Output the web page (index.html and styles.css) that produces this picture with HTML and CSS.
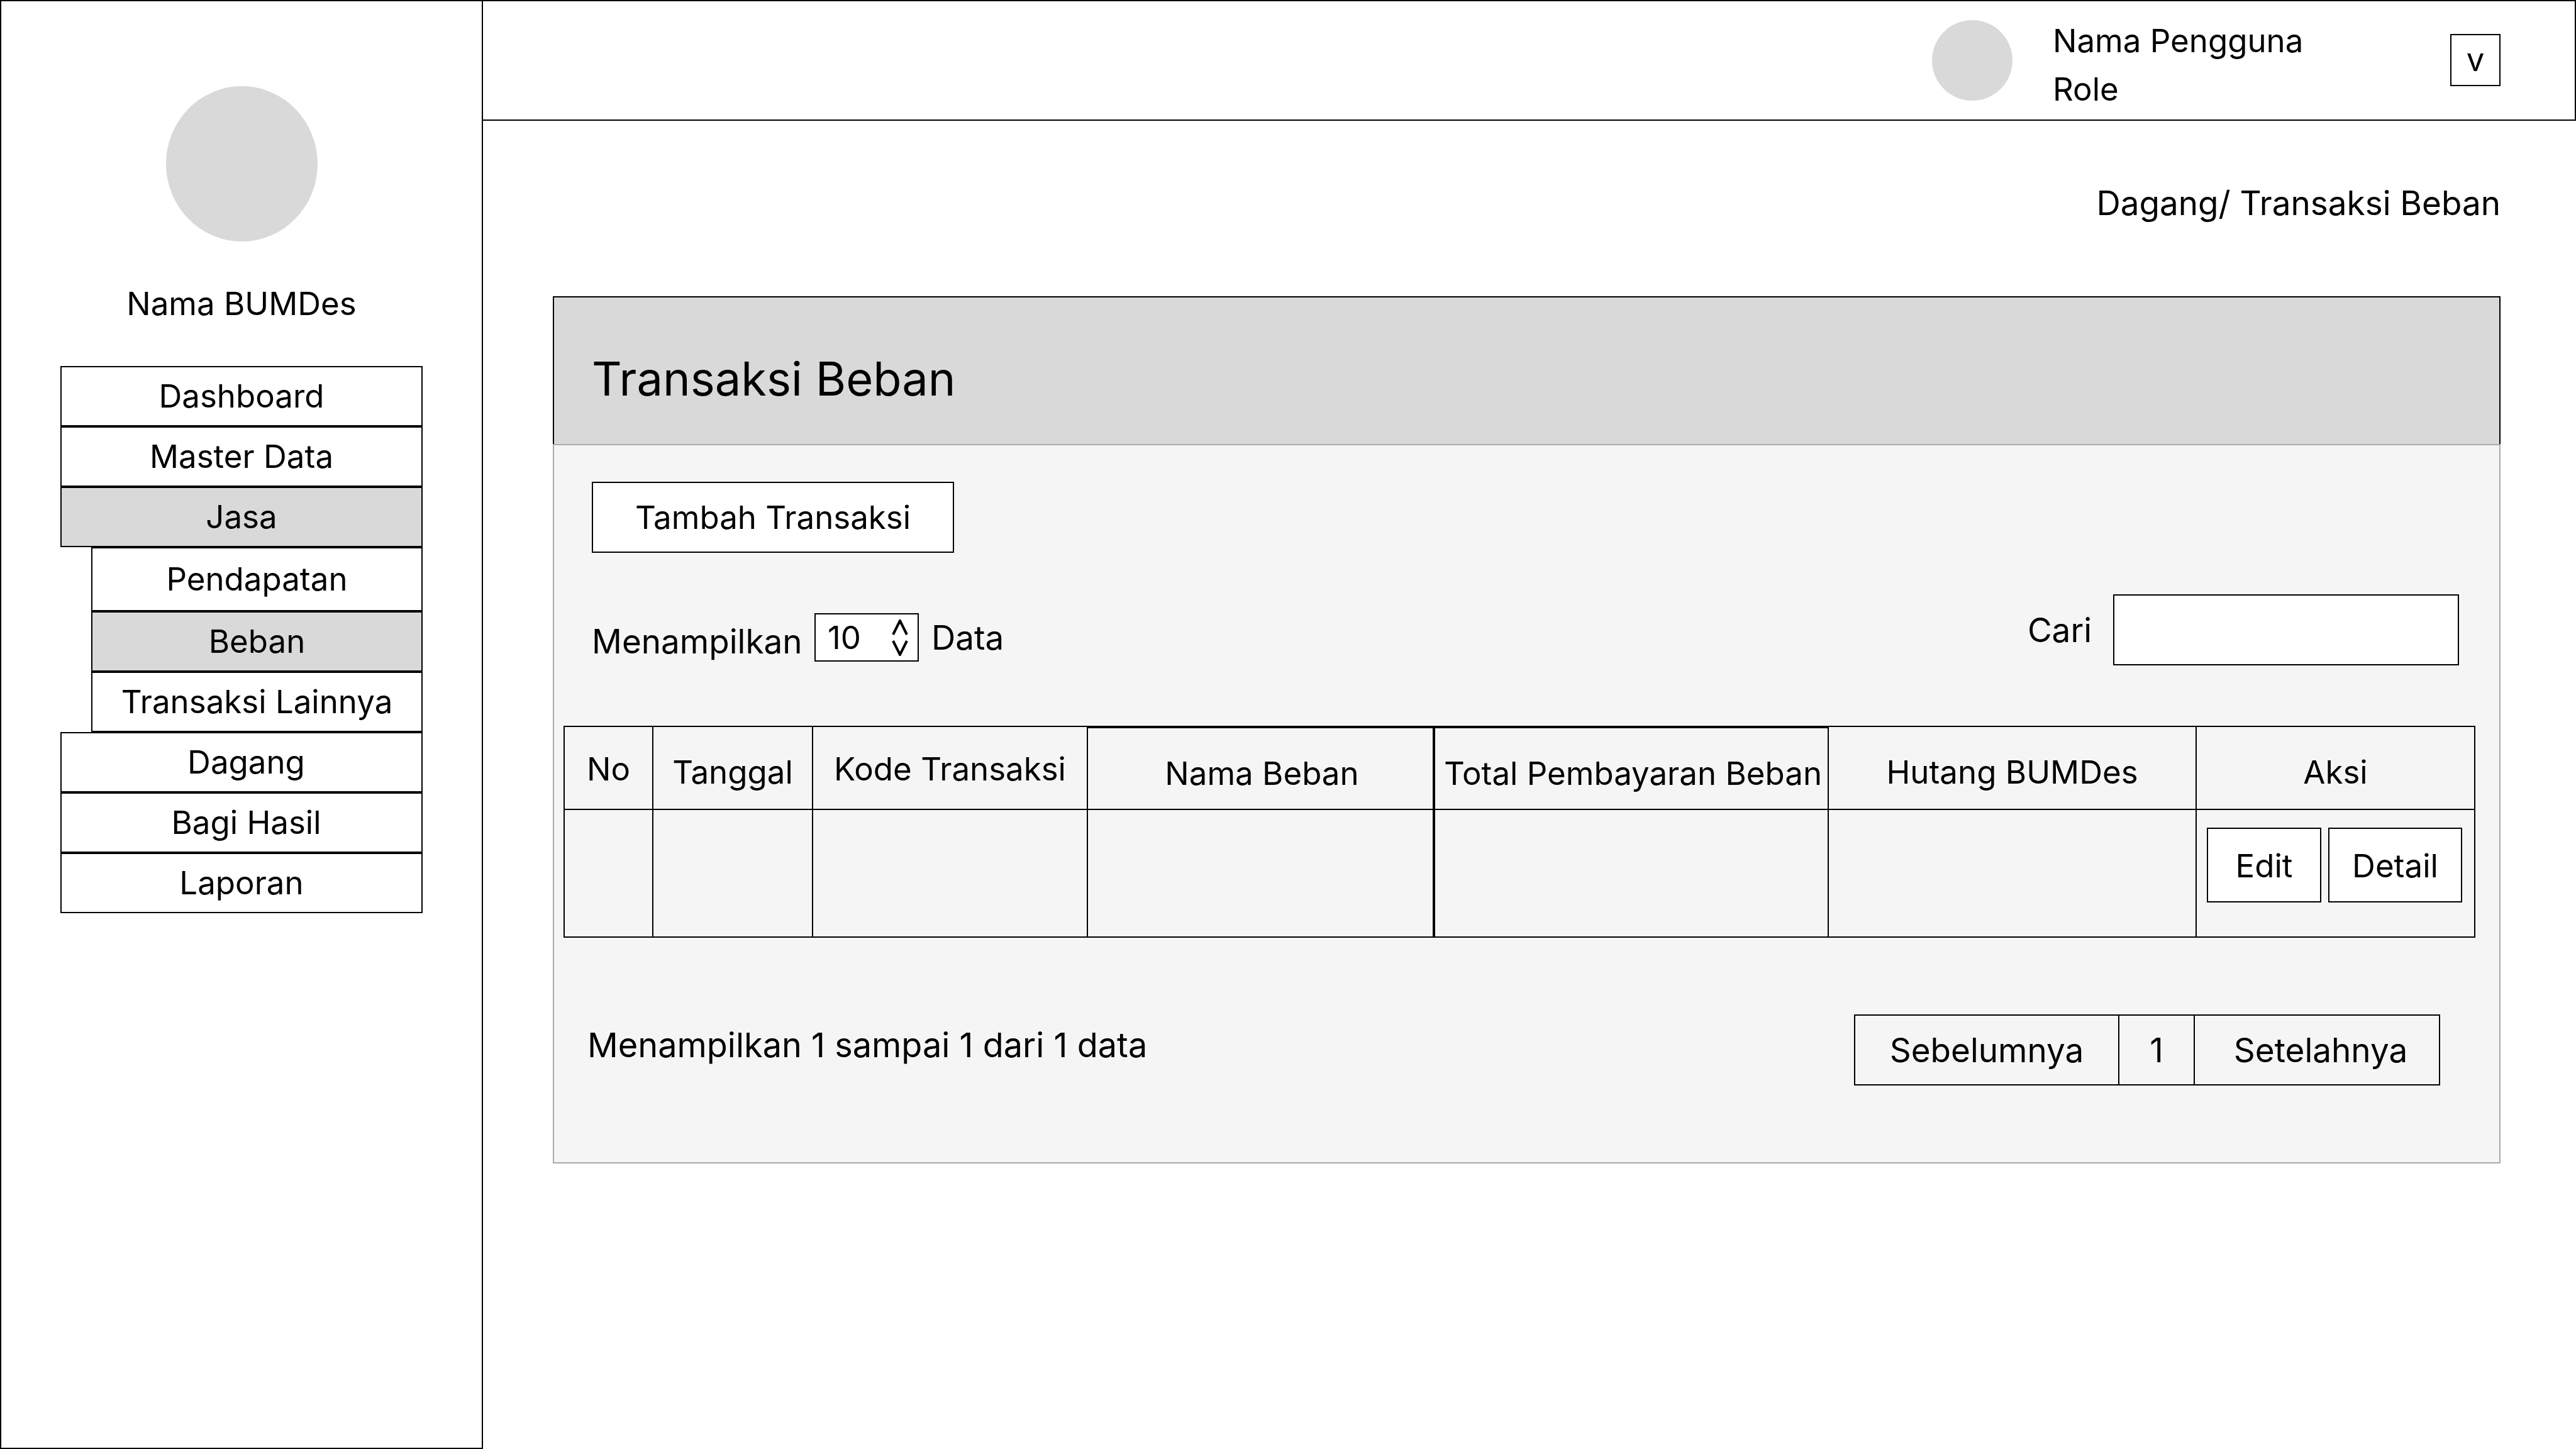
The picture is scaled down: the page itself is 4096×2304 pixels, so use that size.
FILE: index.html
```html
<!DOCTYPE html>
<html lang="id">
<head>
<meta charset="utf-8">
<meta name="viewport" content="width=device-width, initial-scale=1">
<title>Transaksi Beban</title>
<link rel="stylesheet" href="styles.css">
</head>
<body>
<div class="app">
  <aside class="sidebar">
    <div class="logo"></div>
    <p class="org-name">Nama BUMDes</p>
    <nav>
      <ul class="menu">
        <li><a class="menu-link" href="#">Dashboard</a></li>
        <li><a class="menu-link" href="#">Master Data</a></li>
        <li>
          <a class="menu-link is-active" href="#">Jasa</a>
          <ul class="submenu">
            <li><a class="menu-link is-tall" href="#">Pendapatan</a></li>
            <li><a class="menu-link is-active" href="#">Beban</a></li>
            <li><a class="menu-link" href="#">Transaksi Lainnya</a></li>
          </ul>
        </li>
        <li><a class="menu-link is-nudged" href="#">Dagang</a></li>
        <li><a class="menu-link is-nudged" href="#">Bagi Hasil</a></li>
        <li><a class="menu-link" href="#">Laporan</a></li>
      </ul>
    </nav>
  </aside>
  <div class="page">
    <header class="topbar">
      <div class="avatar"></div>
      <div class="user">
        <p>Nama Pengguna</p>
        <p>Role</p>
      </div>
      <button class="user-toggle" type="button">v</button>
    </header>
    <main class="content">
      <p class="breadcrumb">Dagang/ Transaksi Beban</p>
      <section class="card">
        <div class="card-header"><h1>Transaksi Beban</h1></div>
        <div class="card-body">
          <button class="btn btn-add" type="button">Tambah Transaksi</button>
          <div class="filters">
            <div class="length">
              <label class="length-label" for="length">Menampilkan</label>
              <div class="select-wrap">
                <select id="length"><option>10</option><option>25</option><option>50</option></select>
                <svg class="select-arrows" viewBox="0 0 26 58" aria-hidden="true">
                  <path d="M2 24 L13 2 L24 24 M2 34 L13 56 L24 34"/>
                </svg>
              </div>
              <span>Data</span>
            </div>
            <div class="search">
              <label for="search">Cari</label>
              <input id="search" type="text">
            </div>
          </div>
          <table class="data">
            <colgroup>
              <col class="col-no"><col class="col-date"><col class="col-code"><col class="col-name"><col class="col-total"><col class="col-debt"><col class="col-action">
            </colgroup>
            <thead>
              <tr>
                <th>No</th>
                <th class="low">Tanggal</th>
                <th>Kode Transaksi</th>
                <th class="lower thick-top thick-right">Nama Beban</th>
                <th class="lower thick-top">Total Pembayaran Beban</th>
                <th class="low">Hutang BUMDes</th>
                <th class="low">Aksi</th>
              </tr>
            </thead>
            <tbody>
              <tr>
                <td></td>
                <td></td>
                <td></td>
                <td class="thick-right"></td>
                <td></td>
                <td></td>
                <td>
                  <div class="actions">
                    <button class="btn btn-edit" type="button">Edit</button>
                    <button class="btn btn-detail" type="button">Detail</button>
                  </div>
                </td>
              </tr>
            </tbody>
          </table>
          <div class="card-footer">
            <p class="summary">Menampilkan 1 sampai 1 dari 1 data</p>
            <nav class="pagination">
              <button class="page-prev" type="button">Sebelumnya</button>
              <button class="page-number" type="button">1</button>
              <button class="page-next" type="button">Setelahnya</button>
            </nav>
          </div>
        </div>
      </section>
    </main>
  </div>
</div>
</body>
</html>
```
FILE: styles.css
```css
*,
*::before,
*::after {
  box-sizing: border-box;
}

body {
  margin: 0;
  background: #fff;
  color: #000;
  font-family: Inter, "Liberation Sans", sans-serif;
  font-size: 51px;
  line-height: 64px;
}

p,
h1,
ul {
  margin: 0;
  padding: 0;
}

ul {
  list-style: none;
}

button,
input,
select {
  margin: 0;
  padding: 0;
  border: 2px solid #000;
  border-radius: 0;
  background: #fff;
  color: inherit;
  font: inherit;
}

.app {
  display: flex;
  min-height: 100vh;
}

/* Sidebar */

.sidebar {
  flex: 0 0 768px;
  padding: 135px 94px 94px;
  border: 2px solid #000;
}

.logo {
  width: 241px;
  height: 247px;
  margin: 0 auto;
  border-radius: 50%;
  background: #d9d9d9;
}

.org-name {
  margin: 67px 0;
  text-align: center;
}

.menu-link {
  display: flex;
  align-items: center;
  justify-content: center;
  height: 96px;
  border: 2px solid #000;
  color: inherit;
  text-decoration: none;
}

.menu-link.is-active {
  background: #d9d9d9;
}

.menu-link.is-tall {
  height: 102px;
}

.menu-link.is-nudged {
  padding-left: 15px;
}

.submenu {
  margin-left: 49px;
}

/* Top bar */

.page {
  flex: 1;
  min-width: 0;
}

.topbar {
  display: flex;
  align-items: center;
  height: 192px;
  padding: 0 118px 0 0;
  border: 2px solid #000;
  border-left: 0;
}

.avatar {
  width: 128px;
  height: 128px;
  margin-left: auto;
  border-radius: 50%;
  background: #d9d9d9;
}

.user {
  width: 632px;
  margin-left: 64px;
  padding-top: 14px;
  line-height: 77px;
}

.user-toggle {
  width: 80px;
  height: 83px;
  margin-bottom: 2px;
}

/* Content */

.content {
  padding: 99px 120px 120px 111px;
}

.breadcrumb,
.length label,
.length span,
.search,
.card-footer button {
  font-size: 53px;
}

.breadcrumb {
  margin-bottom: 116px;
  text-align: right;
}

.card-header {
  height: 235px;
  padding: 84px 60px 0;
  border: 2px solid #000;
  border-bottom: 0;
  background: #d9d9d9;
}

h1 {
  font-size: 74px;
  font-weight: 400;
  line-height: 90px;
}

.card-body {
  padding: 58px 38px 122px 15px;
  border: 2px solid #aaa;
  background: #f5f5f5;
}

.btn-add {
  display: block;
  width: 576px;
  height: 113px;
  margin-left: 45px;
}

.filters {
  display: flex;
  align-items: center;
  justify-content: space-between;
  margin-top: 66px;
  padding: 0 26px 0 45px;
}

.length {
  display: flex;
  align-items: center;
  padding-top: 24px;
}

.length-label {
  width: 354px;
  padding-top: 12px;
}

.select-wrap {
  position: relative;
  width: 166px;
  height: 77px;
  margin-right: 20px;
}

.select-wrap select {
  width: 100%;
  height: 100%;
  padding-left: 19px;
  appearance: none;
}

.select-arrows {
  position: absolute;
  top: 10px;
  right: 17px;
  width: 26px;
  height: 58px;
  fill: none;
  stroke: #000;
  stroke-width: 4;
  pointer-events: none;
}

.search {
  display: flex;
  align-items: center;
  gap: 34px;
}

.search input {
  width: 550px;
  height: 113px;
  padding: 0 20px;
}

/* Transactions table */

.data {
  width: 100%;
  margin-top: 96px;
  border: solid #000;
  border-width: 2px 0 0 2px;
  border-spacing: 0;
  table-layout: fixed;
}

.col-no { width: 141px; }
.col-date { width: 254px; }
.col-code { width: 437px; }
.col-name { width: 552px; }
.col-total { width: 626px; }
.col-debt { width: 585px; }
.col-action { width: 443px; }

.data th,
.data td {
  padding: 0;
  border: solid #000;
  border-width: 0 2px 2px 0;
}

.data th {
  height: 132px;
  padding-top: 4px;
  font-weight: 400;
  white-space: nowrap;
}

.data th.low {
  padding-top: 13px;
}

.data th.lower {
  padding-top: 15px;
  padding-left: 5px;
}

.data td {
  height: 203px;
  vertical-align: top;
}

.data .thick-top {
  border-top-width: 2px;
}

.data .thick-right {
  border-right-width: 4px;
}

.actions {
  display: flex;
  gap: 11px;
  padding: 28px 0 0 16px;
}

.btn-edit,
.btn-detail {
  height: 119px;
  padding-top: 2px;
}

.btn-edit {
  width: 182px;
}

.btn-detail {
  width: 213px;
}

/* Card footer */

.card-footer {
  display: flex;
  align-items: center;
  justify-content: space-between;
  margin-top: 122px;
  padding: 0 56px 0 38px;
}

.summary {
  padding-bottom: 16px;
  font-size: 54px;
}

.pagination {
  display: flex;
}

.pagination button {
  height: 113px;
  background: transparent;
}

.page-prev {
  width: 422px;
}

.pagination .page-number {
  width: 120px;
  border-left: 0;
}

.pagination .page-next {
  width: 390px;
  padding-left: 12px;
  border-left: 0;
}
```
